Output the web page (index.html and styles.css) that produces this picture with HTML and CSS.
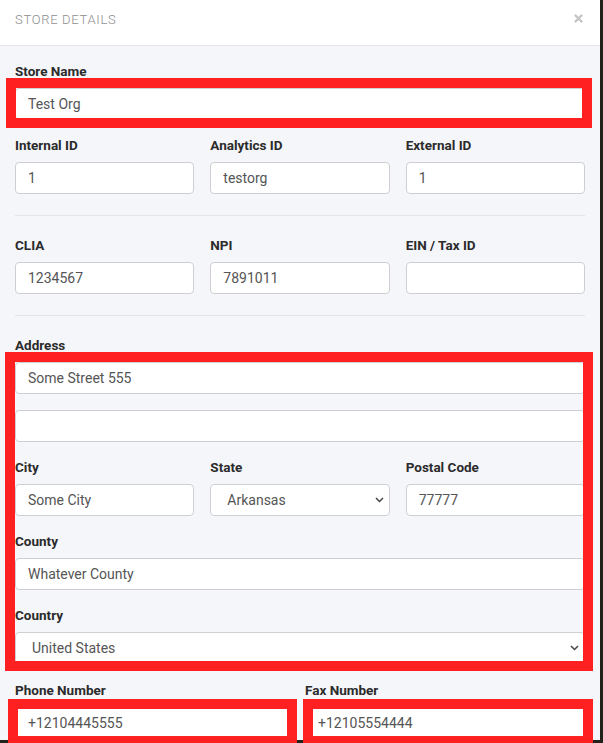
FILE: index.html
```html
<!DOCTYPE html>
<html lang="en">

<head>
  <meta charset="UTF-8">
  <meta name="viewport" content="width=device-width, initial-scale=1.0">
  <title>Store Details</title>
  <link rel="stylesheet" href="styles.css">
</head>

<body>
  <div class="modal">
    <div class="modal-header">
      <span class="modal-title">Store Details</span>
      <span class="close">
        <svg width="9" height="9" viewBox="0 0 9 9"><path d="M1.5 1.5 L7.5 7.5 M7.5 1.5 L1.5 7.5" stroke="#c4c4c4" stroke-width="2.4" stroke-linecap="round"/></svg>
      </span>
    </div>
    <div class="modal-body">
      <div class="group">
        <label>Store Name</label>
        <div class="mark mark-name"><input class="field" value="Test Org" readonly></div>
      </div>

      <div class="row3">
        <div class="group"><label>Internal ID</label><input class="field" value="1" readonly></div>
        <div class="group"><label>Analytics ID</label><input class="field" value="testorg" readonly></div>
        <div class="group"><label>External ID</label><input class="field" value="1" readonly></div>
      </div>
      <hr>
      <div class="row3">
        <div class="group"><label>CLIA</label><input class="field" value="1234567" readonly></div>
        <div class="group"><label>NPI</label><input class="field" value="7891011" readonly></div>
        <div class="group"><label>EIN / Tax ID</label><input class="field" value="" readonly></div>
      </div>
      <hr>

      <div class="group address">
        <label>Address</label>
        <div class="mark mark-address stack">
          <input class="field" value="Some Street 555" readonly>
          <input class="field" value="" readonly>
          <div class="row3 tight">
            <div><label>City</label><input class="field" value="Some City" readonly></div>
            <div>
              <label>State</label>
              <div class="select">
                <select class="field pick"><option>Arkansas</option></select>
                <svg class="chev" width="9" height="6" viewBox="0 0 9 6"><path d="M1 1 L4.5 4.5 L8 1" fill="none" stroke="#444" stroke-width="1.5"/></svg>
              </div>
            </div>
            <div><label>Postal Code</label><input class="field" value="77777" readonly></div>
          </div>
          <div><label>County</label><input class="field" value="Whatever County" readonly></div>
          <div>
            <label>Country</label>
            <div class="select">
              <select class="field pick"><option>United States</option></select>
              <svg class="chev" width="9" height="6" viewBox="0 0 9 6"><path d="M1 1 L4.5 4.5 L8 1" fill="none" stroke="#444" stroke-width="1.5"/></svg>
            </div>
          </div>
        </div>
      </div>

      <div class="row2">
        <div class="group">
          <label>Phone Number</label>
          <div class="mark mark-phone"><input class="field" value="+12104445555" readonly></div>
        </div>
        <div class="group">
          <label>Fax Number</label>
          <div class="mark mark-fax"><input class="field" value="+12105554444" readonly></div>
        </div>
      </div>
    </div>
  </div>
</body>

</html>
```

FILE: styles.css
```css
html,
body {
  margin: 0;
  padding: 0;
}

body {
  width: 603px;
  height: 743px;
  overflow: hidden;
  background: #23221a;
  font-family: Roboto, "Liberation Sans", sans-serif;
}

.modal {
  width: 600px;
  height: 740px;
  background: #f5f6fa;
}

.modal-header {
  display: flex;
  align-items: center;
  justify-content: space-between;
  height: 45px;
  padding: 0 17px 0 15px;
  background: #fff;
  border-bottom: 1px solid #e2e4e8;
  box-sizing: content-box;
}

.modal-title {
  font-size: 13px;
  font-weight: 300;
  letter-spacing: 0.7px;
  text-transform: uppercase;
  color: #8e8e8e;
  margin-top: -7px;
}

.close {
  display: flex;
  margin-top: -8px;
}

.modal-body {
  padding: 16px 15px 0;
}

label {
  display: block;
  font-size: 13.5px;
  font-weight: 700;
  line-height: 18px;
  color: #2b2b2b;
  margin-bottom: 8px;
}

.group {
  margin-bottom: 16px;
}

.address {
  margin-bottom: 17px;
}

.field {
  display: block;
  width: 100%;
  height: 32px;
  box-sizing: border-box;
  margin: 0;
  padding: 0 12px;
  font-family: Roboto, "Liberation Sans", sans-serif;
  font-size: 14px;
  color: #555;
  background: #fff;
  border: 1px solid #cdcfd3;
  border-radius: 4px;
  outline: none;
}

.row3 {
  display: grid;
  grid-template-columns: repeat(3, 1fr);
  gap: 16px;
}

.row2 {
  display: grid;
  grid-template-columns: 1fr 1fr;
  gap: 10px;
}

.stack {
  display: flex;
  flex-direction: column;
  gap: 16px;
}

hr {
  border: 0;
  border-top: 1px solid #e3e5ea;
  margin: 5px 0 20px;
}

.select {
  position: relative;
}

.pick {
  appearance: none;
  -webkit-appearance: none;
  padding-left: 16px;
}

.chev {
  position: absolute;
  right: 6px;
  top: 13px;
  pointer-events: none;
}

/* red annotation frames */
.mark {
  position: relative;
}

.mark::after {
  content: "";
  position: absolute;
  border: 10px solid #ff2121;
  pointer-events: none;
}

.mark-name::after {
  left: -9px;
  right: -7px;
  top: -10px;
  bottom: -8px;
}

.mark-address::after {
  left: -10px;
  right: -8px;
  top: -10px;
  bottom: -7px;
}

.mark-phone::after {
  left: -7px;
  right: -2px;
  top: -8px;
  bottom: -7px;
}

.mark-fax::after {
  left: -2px;
  right: -8px;
  top: -8px;
  bottom: -7px;
}
```
